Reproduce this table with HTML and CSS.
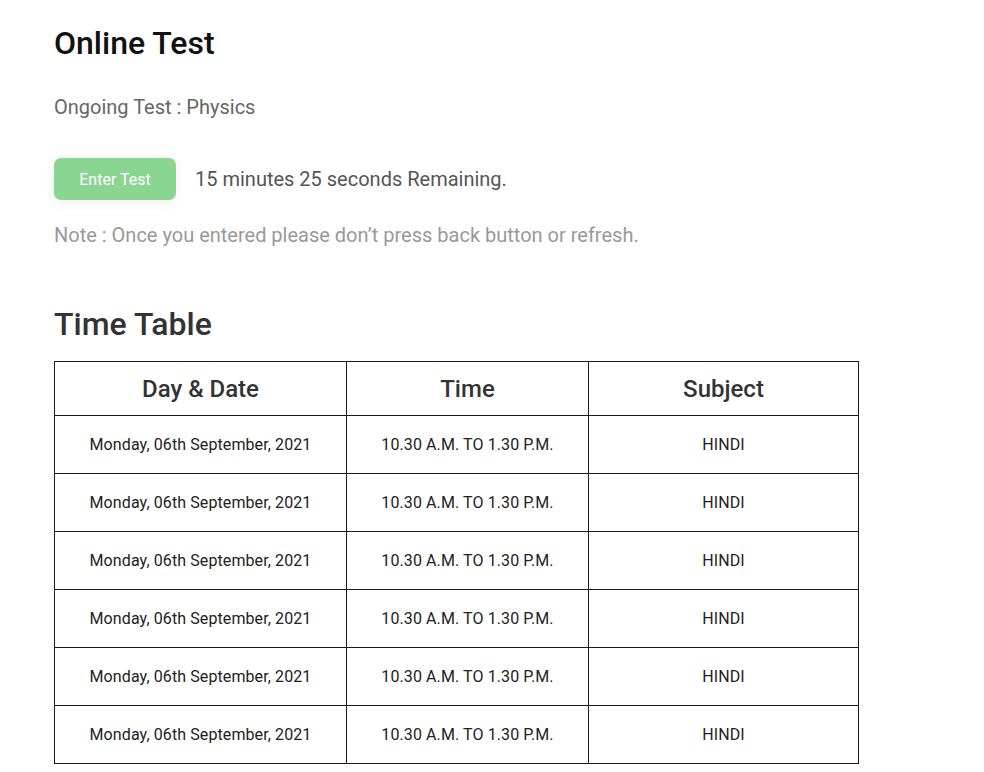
FILE: index.html
```html
<!DOCTYPE html>
<html>
<head>
<meta charset="utf-8">
<link rel="stylesheet" href="styles.css">
</head>
<body>
<main class="page">
  <h1 class="title">Online Test</h1>
  <p class="ongoing">Ongoing Test : Physics</p>
  <div class="enter-row">
    <button class="enter-btn">Enter Test</button>
    <span class="remaining">15 minutes 25 seconds Remaining.</span>
  </div>
  <p class="note">Note : Once you entered please don’t press back button or refresh.</p>
  <h2 class="tt-title">Time Table</h2>
  <table class="tt">
    <colgroup><col class="c1"><col class="c2"><col class="c3"></colgroup>
    <thead>
      <tr><th>Day &amp; Date</th><th>Time</th><th>Subject</th></tr>
    </thead>
    <tbody>
      <tr><td>Monday, 06th September, 2021</td><td>10.30 A.M. TO 1.30 P.M.</td><td>HINDI</td></tr>
      <tr><td>Monday, 06th September, 2021</td><td>10.30 A.M. TO 1.30 P.M.</td><td>HINDI</td></tr>
      <tr><td>Monday, 06th September, 2021</td><td>10.30 A.M. TO 1.30 P.M.</td><td>HINDI</td></tr>
      <tr><td>Monday, 06th September, 2021</td><td>10.30 A.M. TO 1.30 P.M.</td><td>HINDI</td></tr>
      <tr><td>Monday, 06th September, 2021</td><td>10.30 A.M. TO 1.30 P.M.</td><td>HINDI</td></tr>
      <tr><td>Monday, 06th September, 2021</td><td>10.30 A.M. TO 1.30 P.M.</td><td>HINDI</td></tr>
    </tbody>
  </table>
</main>
</body>
</html>
```
FILE: styles.css
```css
html, body { margin: 0; padding: 0; background: #fff; }
body { font-family: Roboto, "Noto Sans", sans-serif; }
.page { padding: 24px 0 0 54px; }
.title { margin: 0; font-size: 32px; font-weight: 500; color: #111; line-height: 38px; }
.ongoing { margin: 33px 0 0; font-size: 20px; color: #666; line-height: 24px; }
.enter-row { display: flex; align-items: center; margin-top: 39px; }
.enter-btn {
  width: 122px; height: 42px; border: none; border-radius: 7px;
  background: #8bd593; color: #fff; font-family: inherit; font-size: 16px;
  box-shadow: 0 4px 12px rgba(0,0,0,0.06);
  padding: 0;
}
.remaining { margin-left: 19px; font-size: 20px; color: #555; }
.note { margin: 23px 0 0; font-size: 20px; color: #999; line-height: 24px; }
.tt-title { margin: 58px 0 0; font-size: 32px; font-weight: 500; color: #333; line-height: 38px; }
.tt { margin-top: 18px; border-collapse: collapse; width: 804px; table-layout: fixed; }
.c1 { width: 292px; } .c2 { width: 242px; } .c3 { width: 270px; }
.tt th, .tt td { border: 1.5px solid #1a1a1a; text-align: center; color: #333; padding: 0; }
.tt th { height: 53px; font-size: 24px; font-weight: 500; }
.tt td { height: 57px; font-size: 16px; font-weight: 400; color: #222; letter-spacing: 0.1px; }
```
